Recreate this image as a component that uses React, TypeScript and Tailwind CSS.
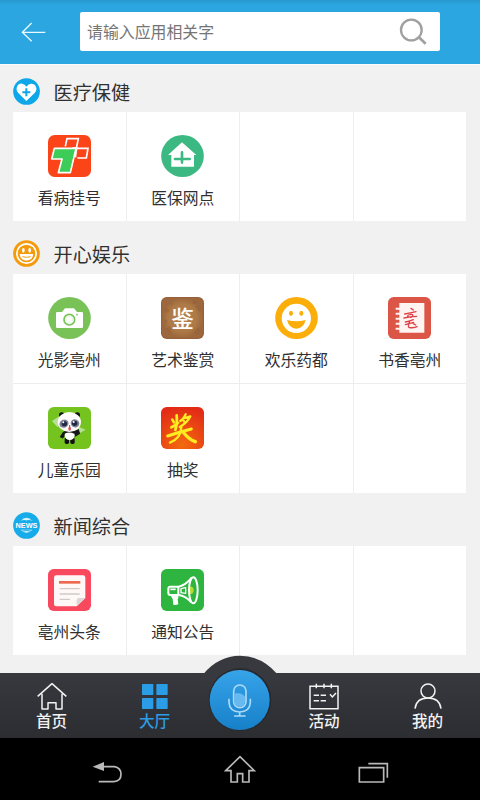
import type { ReactNode } from "react";

const cjk = "font-['Noto_Sans_CJK_SC','Noto_Sans',sans-serif]";

function Tile({ children }: { children: ReactNode }) {
  return (
    <svg className="block h-[42px] w-[43px] shrink-0" viewBox="0 0 129 126">
      {children}
    </svg>
  );
}

const HospitalIcon = () => (
  <Tile>
    <rect width="129" height="126" rx="20" fill="#fb4418" />
    <path d="M52 34 L57 11 H91 L85 40 H120 L115 69 H88" fill="none" stroke="#fff" strokeWidth="5" />
    <path d="M66 31 L68 21 H78 L74 42 M98 50 H107 L106 59 H92" fill="none" stroke="#fb4418" strokeWidth="2" />
    <path d="M19 40 H84 L67 113 H31 L42 72 H11 Z" fill="#3dcc58" stroke="#fff" strokeWidth="5" strokeLinejoin="round" />
    <path d="M73 39 H86 L82 67" fill="none" stroke="#fff" strokeWidth="5" />
  </Tile>
);

const InsuranceIcon = () => (
  <Tile>
    <ellipse cx="64.500" cy="63" rx="64" ry="63" fill="#3cb982" />
    <path d="M63 22 L106 60 H99 V95 H31 V60 H21 Z" fill="#fff" />
    <path d="M63 52 V81 M42 72 H86" stroke="#3cb982" strokeWidth="8" strokeLinecap="round" />
    <path d="M63 79 V86" stroke="#3cb982" strokeWidth="6" />
  </Tile>
);

const CameraIcon = () => (
  <Tile>
    <ellipse cx="64.500" cy="63" rx="64" ry="63" fill="#78c257" />
    <path d="M28 45 H42 L51 34 H78 L87 45 H101 Q105 45 105 49 V89 Q105 93 101 93 H28 Q24 93 24 89 V49 Q24 45 28 45 Z" fill="#fff" />
    <circle cx="64" cy="68" r="16" fill="none" stroke="#78c257" strokeWidth="5" />
    <circle cx="64" cy="68" r="10" fill="#fff" stroke="#b9dfa8" strokeWidth="1" />
    <circle cx="87" cy="53" r="2.500" fill="#78c257" />
  </Tile>
);

const ArtIcon = () => (
  <Tile>
    <defs>
      <radialGradient id="leather">
        <stop offset="0" stopColor="#b5824e" />
        <stop offset="0.7" stopColor="#ad7946" />
        <stop offset="1" stopColor="#9c673c" />
      </radialGradient>
    </defs>
    <rect width="129" height="126" rx="17" fill="#985f38" />
    <rect x="3" y="3" width="123" height="120" rx="15" fill="url(#leather)" />
    <path
      d="M10 36l8-6 3 8 7-3-4 10-9 2zM96 10l13 4-4 6-10 1zM103 25l17 9-5 10-8-7zM15 96l10-9 7 11-6 13zM97 104l15-14 7 11-11 14zM27 16l10 3-4 8zM8 67l12 4-6 12z"
      fill="#955f35"
      opacity=".5"
    />
    <text x="65" y="89" textAnchor="middle" fontSize="68" fontWeight="500" fill="#fff" className="font-['Noto_Sans_CJK_SC',sans-serif]">鉴</text>
  </Tile>
);

const SmileIcon = () => (
  <Tile>
    <ellipse cx="64.500" cy="63" rx="64" ry="63" fill="#fbad09" />
    <circle cx="64" cy="64" r="44" fill="#fff" />
    <ellipse cx="48" cy="49" rx="6" ry="8" fill="#fbad09" />
    <ellipse cx="79" cy="49" rx="6" ry="8" fill="#fbad09" />
    <path d="M36 69 Q64 77 92 69 Q86 94 64 95 Q42 94 36 69 Z" fill="#fbad09" />
  </Tile>
);

const BookIcon = () => (
  <Tile>
    <rect width="129" height="126" rx="17" fill="#dc5648" />
    <path d="M34 18H109V107H34V98H23V92H34V83H23V77H34V68H23V62H34V53H23V47H34V38H23V32H34Z" fill="#fff4f2" />
    <g fill="none" stroke="#df4048" strokeLinecap="round">
      <path d="M69 34l7 5M50 51q17-3 34-7M61 54l-4 8M65 53q12-3 9 4q-5 6-11 3M48 63q18-5 38-5" strokeWidth="4" />
      <path d="M76 68q-13 6-24 7M52 83q16-5 25-7M65 72q-9 22 3 20q12 1 19-3M75 79l8 5" strokeWidth="4" />
    </g>
  </Tile>
);

const PandaIcon = () => (
  <Tile>
    <rect width="129" height="126" rx="17" fill="#75c31f" />
    <path d="M12 42L34 28L38 55L28 60ZM85 56l28 12-17 10-10-5z" fill="#caebbd" opacity=".75" />
    <circle cx="41" cy="24" r="8" fill="#111" />
    <circle cx="88" cy="24" r="8" fill="#111" />
    <path d="M47 75L38 89L44 92L52 82M76 76L91 69L94 79L79 88" fill="#171717" stroke="#171717" strokeWidth="4" />
    <rect x="50" y="91" width="13" height="20" rx="5" fill="#111" />
    <rect x="67" y="91" width="13" height="20" rx="5" fill="#111" />
    <ellipse cx="65" cy="85" rx="15" ry="14" fill="#fff" />
    <path d="M48 77Q65 69 80 77" fill="none" stroke="#171717" strokeWidth="7" />
    <ellipse cx="64" cy="45" rx="35" ry="30" fill="#fffafc" />
    <ellipse cx="48" cy="50" rx="14" ry="12" fill="#7b8093" transform="rotate(-25 48 50)" />
    <ellipse cx="81" cy="49" rx="13" ry="12" fill="#7b8093" transform="rotate(25 81 49)" />
    <circle cx="49" cy="50" r="8" fill="#202743" />
    <circle cx="80" cy="49" r="8" fill="#202743" />
    <circle cx="46" cy="46" r="3" fill="#fff" />
    <circle cx="77" cy="45" r="3" fill="#fff" />
    <ellipse cx="65" cy="65" rx="4" ry="6" fill="#d94e50" />
    <circle cx="65" cy="57" r="2" fill="#241f20" />
  </Tile>
);

const PrizeIcon = () => (
  <Tile>
    <defs>
      <radialGradient id="prize" cy="90%" r="90%">
        <stop stopColor="#f36a0e" />
        <stop offset="1" stopColor="#e22b16" />
      </radialGradient>
    </defs>
    <rect width="129" height="126" rx="17" fill="url(#prize)" />
    <g fill="none" stroke="#ffec21" strokeLinecap="round" strokeLinejoin="round">
      <path d="M47 25Q50 48 43 69M34 38L39 46M31 61Q41 57 51 48" strokeWidth="8" />
      <path d="M74 22Q69 34 58 42M65 35L88 28Q79 47 56 60M68 42L73 48" strokeWidth="7" />
      <path d="M20 87Q53 76 91 66" strokeWidth="9" />
      <path d="M61 61Q60 94 27 107" strokeWidth="7" />
      <path d="M68 77Q84 97 103 104" strokeWidth="10" />
    </g>
  </Tile>
);

const HeadlineIcon = () => (
  <Tile>
    <rect width="129" height="126" rx="17" fill="#f9495f" />
    <path d="M25 19H105Q112 19 112 26V87L86 112H25Q18 112 18 105V26Q18 19 25 19Z" fill="#fff8f7" />
    <path d="M33 40H97" stroke="#ee684f" strokeWidth="8" />
    <path d="M35 59H95M35 75H95M35 91H66" stroke="#cecaca" strokeWidth="4" />
    <path d="M86 112V94Q86 87 93 87H112Z" fill="#ddd6d6" />
  </Tile>
);

const NoticeIcon = () => (
  <Tile>
    <rect width="129" height="126" rx="17" fill="#2db540" />
    <path d="M85 52Q98 52 98 64Q98 76 85 76Z" fill="#b9dc32" />
    <g fill="none" stroke="#fff" strokeWidth="6" strokeLinejoin="round">
      <path d="M28 53H52V78H28Q22 78 22 72V59Q22 53 28 53Z" />
      <path d="M53 53Q74 49 92 26M53 78Q73 80 91 100" />
      <ellipse cx="97" cy="64" rx="13" ry="39" />
      <path d="M60 59L74 56V73L60 71Z" strokeWidth="4" />
    </g>
    <path d="M30 78H52V88L50 90L52 106Q43 110 37 107L35 90Q30 86 30 78Z" fill="#fff" />
    <path d="M28 61H44" stroke="#fff" strokeWidth="5" />
  </Tile>
);

const HeartBadge = () => (
  <svg className="h-[27px] w-[27px]" viewBox="0 0 81 81">
    <circle cx="40.500" cy="40.500" r="40" fill="#0ea7e9" />
    <path d="M40 69L16 45Q8 36 12 26Q17 15 28 17Q36 18 40 26Q45 18 53 17Q65 16 69 26Q73 36 65 45Z" fill="#fff" />
    <path d="M40 31V55M28 43H52" stroke="#0ea7e9" strokeWidth="6" />
  </svg>
);

const JoyBadge = () => (
  <svg className="h-[27px] w-[27px]" viewBox="0 0 81 81">
    <circle cx="40.500" cy="40.500" r="40" fill="#f39b0c" />
    <circle cx="40.500" cy="40.500" r="29" fill="none" stroke="#fff" strokeWidth="5" />
    <ellipse cx="31" cy="31" rx="4" ry="7" fill="#fff" />
    <ellipse cx="50" cy="31" rx="4" ry="7" fill="#fff" />
    <path d="M20 42H61Q59 61 40 62Q22 61 20 42Z" fill="#fff" />
    <path d="M28 50Q40 54 53 50" fill="none" stroke="#f39b0c" strokeWidth="3" />
  </svg>
);

const NewsBadge = () => (
  <svg className="h-[27px] w-[27px]" viewBox="0 0 81 81">
    <circle cx="40.500" cy="40.500" r="40" fill="#16abe9" />
    <path d="M22 27Q40 8 59 27ZM22 53Q40 72 59 53Z" fill="#d8f2fc" />
    <path d="M23 24Q40 29 58 24M23 58Q40 53 58 58" fill="none" stroke="#16abe9" strokeWidth="3" />
    <text x="40.500" y="47.500" textAnchor="middle" textLength="66" lengthAdjust="spacingAndGlyphs" fontSize="20" fontWeight="700" fill="#fff" className="font-['Liberation_Sans',sans-serif]">NEWS</text>
  </svg>
);

type App = { name: string; icon: ReactNode };
type Group = { title: string; badge: ReactNode; apps: App[]; cells: number };

const groups: Group[] = [
  {
    title: "医疗保健",
    badge: <HeartBadge />,
    cells: 4,
    apps: [
      { name: "看病挂号", icon: <HospitalIcon /> },
      { name: "医保网点", icon: <InsuranceIcon /> },
    ],
  },
  {
    title: "开心娱乐",
    badge: <JoyBadge />,
    cells: 8,
    apps: [
      { name: "光影亳州", icon: <CameraIcon /> },
      { name: "艺术鉴赏", icon: <ArtIcon /> },
      { name: "欢乐药都", icon: <SmileIcon /> },
      { name: "书香亳州", icon: <BookIcon /> },
      { name: "儿童乐园", icon: <PandaIcon /> },
      { name: "抽奖", icon: <PrizeIcon /> },
    ],
  },
  {
    title: "新闻综合",
    badge: <NewsBadge />,
    cells: 4,
    apps: [
      { name: "亳州头条", icon: <HeadlineIcon /> },
      { name: "通知公告", icon: <NoticeIcon /> },
    ],
  },
];

function Section({ group }: { group: Group }) {
  return (
    <section>
      <div className="flex h-[53px] items-center pt-[12px]">
        {group.badge}
        <h2 className="ml-[13.500px] text-[19.200px] leading-6 text-[#303030]">{group.title}</h2>
      </div>
      <div className="grid auto-rows-[109px] grid-cols-4 gap-px bg-[#ededed]">
        {Array.from({ length: group.cells }, (_, i) => {
          const app = group.apps[i];
          return (
            <div key={i} className="flex flex-col items-center bg-white pt-[23px]">
              {app && app.icon}
              {app && <span className="mt-[10px] text-[15.800px] leading-[22px] text-[#303030]">{app.name}</span>}
            </div>
          );
        })}
      </div>
    </section>
  );
}

function TabItem({ label, active, children }: { label: string; active?: boolean; children: ReactNode }) {
  return (
    <div className={`flex flex-col items-center pt-[9px] ${active ? "text-[#2b9ce6]" : "text-[#f2f2f2]"}`}>
      <svg className="h-[29px] w-[32px]" viewBox="0 0 96 87" fill="none" stroke="currentColor" strokeWidth="4.500">
        {children}
      </svg>
      <span className="-mt-px text-[15.600px] font-medium leading-[20px]">{label}</span>
    </div>
  );
}

export default function App() {
  return (
    <div className={`flex h-[800px] w-[480px] flex-col overflow-hidden bg-[#f1f1f1] ${cjk}`}>
      <header className="flex h-[64px] shrink-0 items-start bg-linear-to-b from-[#2898ce] to-[#2ba6e1] to-8% pl-[21px]">
        <svg className="mt-[22px] h-[21px] w-[25px]" viewBox="0 0 75 63" fill="none" stroke="#e8fbff" strokeWidth="4">
          <path d="M73 31H4M32 3L4 31L32 58" />
        </svg>
        <div className="ml-[34px] mt-[12px] flex h-[39px] w-[360px] items-center justify-between rounded-[2px] bg-white pl-[7px] pr-[13px]">
          <span className="text-[15.900px] leading-6 text-[#757575]">请输入应用相关字</span>
          <svg className="h-[27px] w-[28px]" viewBox="0 0 84 81" fill="none" stroke="#a0a0a0" strokeWidth="7">
            <circle cx="37" cy="36" r="31" />
            <path d="M59 57L80 77" strokeWidth="8" />
          </svg>
        </div>
      </header>

      <main className="h-[609px] shrink-0 border-t border-[#f9fcfd] pl-[13px] pr-[14px]">
        <div className="-mt-[6px]">
          {groups.map((g) => (
            <Section key={g.title} group={g} />
          ))}
        </div>
      </main>

      <nav className="relative grid h-[65px] shrink-0 grid-cols-[103px_103px_67px_102px_105px] bg-linear-to-b from-[#37393f] to-[#2c2d31]">
        <TabItem label="首页">
          <path d="M5 43L48 5L91 43M18 35V81H36V62H60V81H78V35" strokeLinejoin="round" />
        </TabItem>
        <TabItem label="大厅" active>
          <g fill="currentColor" stroke="none">
            <rect x="9" y="6" width="34" height="33" rx="2" />
            <rect x="52" y="6" width="34" height="33" rx="2" />
            <rect x="9" y="48" width="34" height="33" rx="2" />
            <rect x="52" y="48" width="34" height="33" rx="2" />
          </g>
        </TabItem>
        <div className="absolute -top-[18px] left-[194px] h-[83px] w-[92px]">
          <svg className="h-full w-full" viewBox="0 0 276 249">
            <defs>
              <linearGradient id="mic" x2="0" y2="1">
                <stop stopColor="#37a3e9" />
                <stop offset="1" stopColor="#1680c9" />
              </linearGradient>
            </defs>
            <path d="M10 56H29Q73 3 138 2Q203 3 249 56H266V80H10Z" fill="#37393f" />
            <circle cx="138" cy="134" r="94" fill="#27292e" />
            <circle cx="137" cy="135" r="90" fill="url(#mic)" />
            <g fill="none" stroke="#a9dafa" strokeWidth="5" strokeLinecap="round">
              <rect x="119" y="90" width="37" height="68" rx="18" />
              <path d="M105 133V142Q106 170 137 171Q168 170 169 142V133M137 171V183M122 183H153" />
            </g>
            <path d="M122 116Q138 110 153 124V141Q151 155 138 156Q122 154 122 140Z" fill="#67b9ef" />
          </svg>
        </div>
        <div />
        <TabItem label="活动">
          <path d="M6 13H90V80H6ZM25 5V19M48 5V19M70 5V19M17 40H33M38 40H54M17 56H33M38 56H54M66 37L73 45L84 33" />
        </TabItem>
        <TabItem label="我的">
          <circle cx="48" cy="27" r="21" />
          <path d="M9 80Q13 48 48 48Q83 48 87 80" />
        </TabItem>
      </nav>

      <footer className="flex h-[62px] shrink-0 bg-black pl-[92px] text-[#b9b9b9]">
        <svg className="mt-[23px] h-[23px] w-[31px]" viewBox="0 0 93 69" fill="none" stroke="currentColor" strokeWidth="5">
          <path d="M32 17H67Q87 20 87 40Q87 61 65 62H20" />
          <path d="M2 17L36 3V30Z" fill="currentColor" stroke="none" />
        </svg>
        <svg className="ml-[101px] mt-[16px] h-[31px] w-[32px]" viewBox="0 0 96 93" fill="none" stroke="currentColor" strokeWidth="5">
          <path d="M5 50L48 8L91 50H75V84H56V59H40V84H21V50Z" />
        </svg>
        <svg className="ml-[102px] mt-[24px] h-[22px] w-[31px]" viewBox="0 0 93 66" fill="none" stroke="currentColor" strokeWidth="5">
          <path d="M4 17H77V60H4Z" strokeWidth="5" />
          <path d="M31 5H88V47" />
        </svg>
      </footer>
    </div>
  );
}
